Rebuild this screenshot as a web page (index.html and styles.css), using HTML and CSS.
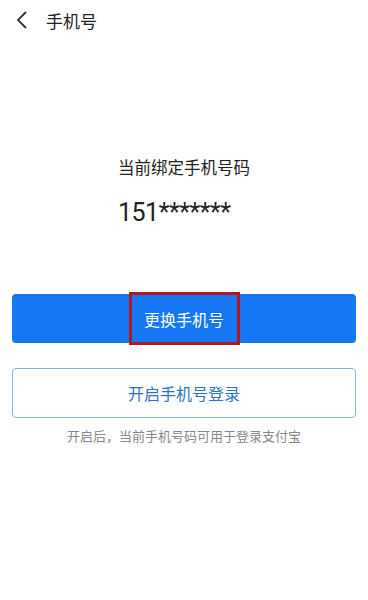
FILE: index.html
```html
<!DOCTYPE html>
<html lang="zh-CN">
<head>
    <meta charset="UTF-8">
    <meta name="viewport" content="width=device-width, initial-scale=1.0">
    <title>手机号</title>
    <link rel="stylesheet" href="styles.css">
</head>
<body>

    <!-- Top bar -->
    <div class="topbar">
        <svg class="back" width="12" height="18" viewBox="0 0 12 18">
            <path d="M10 1 L2 9 L10 17" fill="none" stroke="#333" stroke-width="1.8"/>
        </svg>
        <span class="title">手机号</span>
    </div>

    <!-- Current number -->
    <div class="current">
        <div class="current-inner">
            <div class="label">当前绑定手机号码</div>
            <div class="number">151*******</div>
        </div>
    </div>

    <!-- Actions -->
    <div class="actions">
        <button class="btn btn-primary"><span class="mark">更换手机号</span></button>
        <button class="btn btn-outline">开启手机号登录</button>
        <p class="hint">开启后，当前手机号码可用于登录支付宝</p>
    </div>

</body>
</html>
```

FILE: styles.css
```css
/* Basic page */
body {
    margin: 0;
    padding: 0;
    background-color: #ffffff;
    font-family: "Noto Sans CJK SC", "Noto Sans", sans-serif;
    color: #222;
}

/* Top bar */
.topbar {
    height: 40px;
    display: flex;
    align-items: center;
    padding-left: 16px;
}

.back {
    margin-right: 18px;
}

.title {
    font-size: 17px;
    color: #222;
}

/* Current bound number */
.current {
    margin-top: 115px;
    text-align: center;
}

.current-inner {
    display: inline-block;
    text-align: left;
}

.label {
    font-size: 16.5px;
    line-height: 24px;
}

.number {
    margin-top: 19px;
    font-family: Roboto, "Liberation Sans", sans-serif;
    font-size: 25px;
    line-height: 30px;
    letter-spacing: -0.5px;
    color: #222;
}

/* Buttons */
.actions {
    margin-top: 66px;
    padding: 0 12px;
}

.btn {
    display: flex;
    align-items: center;
    justify-content: center;
    width: 100%;
    height: 49px;
    border-radius: 4px;
    font-family: "Noto Sans CJK SC", sans-serif;
    font-size: 16px;
    padding: 0;
}

.btn-primary {
    background-color: #1677f5;
    border: none;
    color: #ffffff;
}

/* red highlight box drawn on the screenshot */
.mark {
    box-sizing: border-box;
    width: 111px;
    height: 53px;
    display: flex;
    align-items: center;
    justify-content: center;
    border: 3px solid #b01820;
}

.btn-outline {
    margin-top: 25px;
    height: 50px;
    background-color: #ffffff;
    border: 1.5px solid #8cb3d6;
    color: #2a74c9;
}

.hint {
    margin: 8px 0 0;
    text-align: center;
    font-size: 13px;
    color: #888;
}
```
